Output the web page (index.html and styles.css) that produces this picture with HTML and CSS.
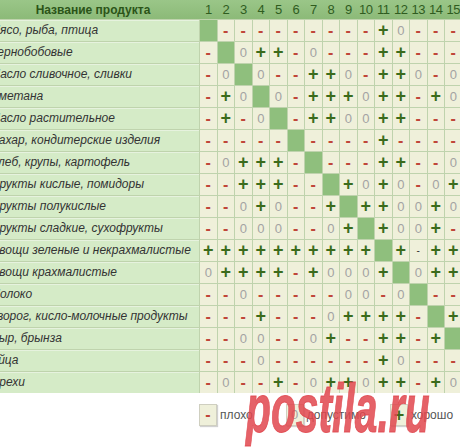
FILE: index.html
```html
<!DOCTYPE html>
<html lang="ru">
<head>
<meta charset="utf-8">
<title>Совместимость продуктов</title>
<link rel="stylesheet" href="styles.css">
</head>
<body>
<div class="page">
  <div class="table">
    <div class="thead">
      <div class="h-name">Название продукта</div>
      <div class="h-num">1</div><div class="h-num">2</div><div class="h-num">3</div><div class="h-num">4</div><div class="h-num">5</div><div class="h-num">6</div><div class="h-num">7</div><div class="h-num">8</div><div class="h-num">9</div><div class="h-num">10</div><div class="h-num">11</div><div class="h-num">12</div><div class="h-num">13</div><div class="h-num">14</div><div class="h-num">15</div>
    </div>
    <div class="tbody">
      <div class="n">Мясо, рыба, птица</div>
      <div class="c d"></div><div class="c m">-</div><div class="c m">-</div><div class="c m">-</div><div class="c m">-</div><div class="c m">-</div><div class="c m">-</div><div class="c m">-</div><div class="c m">-</div><div class="c m">-</div><div class="c p">+</div><div class="c z">0</div><div class="c m">-</div><div class="c m">-</div><div class="c m">-</div>

      <div class="n">Зернобобовые</div>
      <div class="c m">-</div><div class="c d"></div><div class="c z">0</div><div class="c p">+</div><div class="c p">+</div><div class="c m">-</div><div class="c z">0</div><div class="c m">-</div><div class="c m">-</div><div class="c m">-</div><div class="c p">+</div><div class="c p">+</div><div class="c m">-</div><div class="c m">-</div><div class="c m">-</div>

      <div class="n">Масло сливочное, сливки</div>
      <div class="c m">-</div><div class="c z">0</div><div class="c d"></div><div class="c z">0</div><div class="c m">-</div><div class="c m">-</div><div class="c p">+</div><div class="c p">+</div><div class="c z">0</div><div class="c m">-</div><div class="c p">+</div><div class="c p">+</div><div class="c z">0</div><div class="c m">-</div><div class="c z">0</div>

      <div class="n">Сметана</div>
      <div class="c m">-</div><div class="c p">+</div><div class="c z">0</div><div class="c d"></div><div class="c z">0</div><div class="c m">-</div><div class="c p">+</div><div class="c p">+</div><div class="c p">+</div><div class="c z">0</div><div class="c p">+</div><div class="c p">+</div><div class="c m">-</div><div class="c p">+</div><div class="c z">0</div>

      <div class="n">Масло растительное</div>
      <div class="c m">-</div><div class="c p">+</div><div class="c m">-</div><div class="c z">0</div><div class="c d"></div><div class="c m">-</div><div class="c p">+</div><div class="c p">+</div><div class="c z">0</div><div class="c z">0</div><div class="c p">+</div><div class="c p">+</div><div class="c m">-</div><div class="c m">-</div><div class="c m">-</div>

      <div class="n">Сахар, кондитерские изделия</div>
      <div class="c m">-</div><div class="c m">-</div><div class="c m">-</div><div class="c m">-</div><div class="c m">-</div><div class="c d"></div><div class="c m">-</div><div class="c m">-</div><div class="c m">-</div><div class="c m">-</div><div class="c p">+</div><div class="c m">-</div><div class="c m">-</div><div class="c m">-</div><div class="c m">-</div>

      <div class="n">Хлеб, крупы, картофель</div>
      <div class="c m">-</div><div class="c z">0</div><div class="c p">+</div><div class="c p">+</div><div class="c p">+</div><div class="c m">-</div><div class="c d"></div><div class="c m">-</div><div class="c m">-</div><div class="c m">-</div><div class="c p">+</div><div class="c p">+</div><div class="c m">-</div><div class="c m">-</div><div class="c z">0</div>

      <div class="n">Фрукты кислые, помидоры</div>
      <div class="c m">-</div><div class="c m">-</div><div class="c p">+</div><div class="c p">+</div><div class="c p">+</div><div class="c m">-</div><div class="c m">-</div><div class="c d"></div><div class="c p">+</div><div class="c z">0</div><div class="c p">+</div><div class="c z">0</div><div class="c m">-</div><div class="c z">0</div><div class="c p">+</div>

      <div class="n">Фрукты полукислые</div>
      <div class="c m">-</div><div class="c m">-</div><div class="c z">0</div><div class="c p">+</div><div class="c z">0</div><div class="c m">-</div><div class="c m">-</div><div class="c p">+</div><div class="c d"></div><div class="c p">+</div><div class="c p">+</div><div class="c z">0</div><div class="c z">0</div><div class="c p">+</div><div class="c z">0</div>

      <div class="n">Фрукты сладкие, сухофрукты</div>
      <div class="c m">-</div><div class="c m">-</div><div class="c z">0</div><div class="c z">0</div><div class="c z">0</div><div class="c m">-</div><div class="c m">-</div><div class="c z">0</div><div class="c p">+</div><div class="c d"></div><div class="c p">+</div><div class="c z">0</div><div class="c z">0</div><div class="c p">+</div><div class="c m">-</div>

      <div class="n">Овощи зеленые и некрахмалистые</div>
      <div class="c p">+</div><div class="c p">+</div><div class="c p">+</div><div class="c p">+</div><div class="c p">+</div><div class="c p">+</div><div class="c p">+</div><div class="c p">+</div><div class="c p">+</div><div class="c p">+</div><div class="c d"></div><div class="c p">+</div><div class="c k">-</div><div class="c p">+</div><div class="c p">+</div>

      <div class="n">Овощи крахмалистые</div>
      <div class="c z">0</div><div class="c p">+</div><div class="c p">+</div><div class="c p">+</div><div class="c p">+</div><div class="c m">-</div><div class="c p">+</div><div class="c z">0</div><div class="c z">0</div><div class="c z">0</div><div class="c p">+</div><div class="c d"></div><div class="c z">0</div><div class="c p">+</div><div class="c p">+</div>

      <div class="n">Молоко</div>
      <div class="c m">-</div><div class="c m">-</div><div class="c z">0</div><div class="c m">-</div><div class="c m">-</div><div class="c m">-</div><div class="c m">-</div><div class="c m">-</div><div class="c z">0</div><div class="c z">0</div><div class="c m">-</div><div class="c z">0</div><div class="c d"></div><div class="c m">-</div><div class="c m">-</div>

      <div class="n">Творог, кисло-молочные продукты</div>
      <div class="c m">-</div><div class="c m">-</div><div class="c m">-</div><div class="c p">+</div><div class="c m">-</div><div class="c m">-</div><div class="c m">-</div><div class="c z">0</div><div class="c p">+</div><div class="c p">+</div><div class="c p">+</div><div class="c p">+</div><div class="c m">-</div><div class="c d"></div><div class="c p">+</div>

      <div class="n">Сыр, брынза</div>
      <div class="c m">-</div><div class="c m">-</div><div class="c z">0</div><div class="c z">0</div><div class="c m">-</div><div class="c m">-</div><div class="c z">0</div><div class="c p">+</div><div class="c m">-</div><div class="c m">-</div><div class="c p">+</div><div class="c p">+</div><div class="c m">-</div><div class="c p">+</div><div class="c d"></div>

      <div class="n">Яйца</div>
      <div class="c m">-</div><div class="c m">-</div><div class="c m">-</div><div class="c z">0</div><div class="c m">-</div><div class="c m">-</div><div class="c m">-</div><div class="c m">-</div><div class="c m">-</div><div class="c m">-</div><div class="c p">+</div><div class="c z">0</div><div class="c m">-</div><div class="c m">-</div><div class="c m">-</div>

      <div class="n">Орехи</div>
      <div class="c m">-</div><div class="c z">0</div><div class="c m">-</div><div class="c m">-</div><div class="c p">+</div><div class="c m">-</div><div class="c z">0</div><div class="c p">+</div><div class="c p">+</div><div class="c z">0</div><div class="c p">+</div><div class="c p">+</div><div class="c m">-</div><div class="c p">+</div><div class="c z">0</div>
    </div>
  </div>

  <div class="legend">
    <div class="legend-item li-bad"><span class="lbox m">-</span><span class="ltext">плохо</span></div>
    <div class="legend-item li-ok"><span class="lbox z">0</span><span class="ltext">допустимо</span></div>
    <div class="legend-item"><span class="lbox p">+</span><span class="ltext">хорошо</span></div>
  </div>

  <div class="wm">postila.ru</div>
</div>
</body>
</html>
```
FILE: styles.css
```css
html, body {
  margin: 0;
  padding: 0;
  background: #ffffff;
}

body {
  font-family: "Liberation Sans", Arial, sans-serif;
}

.page {
  position: relative;
  width: 460px;
  height: 448px;
  overflow: hidden;
}

.table {
  margin-left: -13px;
  width: max-content;
}

.thead {
  display: grid;
  grid-template-columns: 212px repeat(15, 16.5px);
  column-gap: 1px;
  height: 19px;
  align-items: center;
  background: linear-gradient(#9ac688, #8cba78);
}

.h-name {
  text-align: center;
  font-weight: bold;
  font-size: 12px;
  color: #2b5418;
}

.h-num {
  text-align: center;
  font-size: 13px;
  letter-spacing: -0.6px;
  color: #2f5c1f;
  white-space: nowrap;
}

.tbody {
  display: grid;
  grid-template-columns: 212px repeat(15, 16.5px);
  grid-auto-rows: 21px;
  gap: 1px;
  padding-top: 1px;
  background: #bfd3ad;
}

.n {
  background: #d5ebc7;
  box-shadow: inset 0 1px 0 #e6f2de;
  font-style: italic;
  font-size: 12px;
  color: #333333;
  padding-left: 3px;
  line-height: 21px;
  white-space: nowrap;
  overflow: hidden;
}

.c {
  background: #eff0da;
  text-align: center;
  line-height: 21px;
  overflow: hidden;
}

.m {
  color: #c0463a;
  font-weight: bold;
  font-size: 16px;
}

.p {
  color: #3b6b1c;
  font-weight: bold;
  font-size: 18px;
}

.z {
  color: #a3a3a3;
  font-size: 13px;
}

.k {
  color: #333333;
  font-size: 10px;
}

.d {
  background: #8fbf7d;
}

.legend {
  display: flex;
  align-items: center;
  margin-top: 11px;
  padding-left: 199px;
}

.legend-item {
  display: flex;
  align-items: center;
  gap: 3px;
}

.li-bad {
  margin-right: 33px;
}

.li-ok {
  margin-right: 24px;
}

.lbox {
  box-sizing: border-box;
  width: 18px;
  height: 22px;
  line-height: 20px;
  text-align: center;
  background: #eff0da;
  border: 1px solid #cfcfc0;
  box-shadow: 1px 1px 1px rgba(0, 0, 0, 0.18);
}

.ltext {
  font-size: 12px;
  color: #555555;
}

.wm {
  position: absolute;
  left: 246px;
  top: 374px;
  font-family: "Liberation Sans", Arial, sans-serif;
  font-weight: bold;
  font-style: italic;
  font-size: 68px;
  line-height: 1;
  color: rgba(224, 70, 78, 0.85);
  -webkit-text-stroke: 1px rgba(224, 70, 78, 0.85);
  transform: scaleX(0.6);
  transform-origin: left top;
  white-space: nowrap;
}
```
